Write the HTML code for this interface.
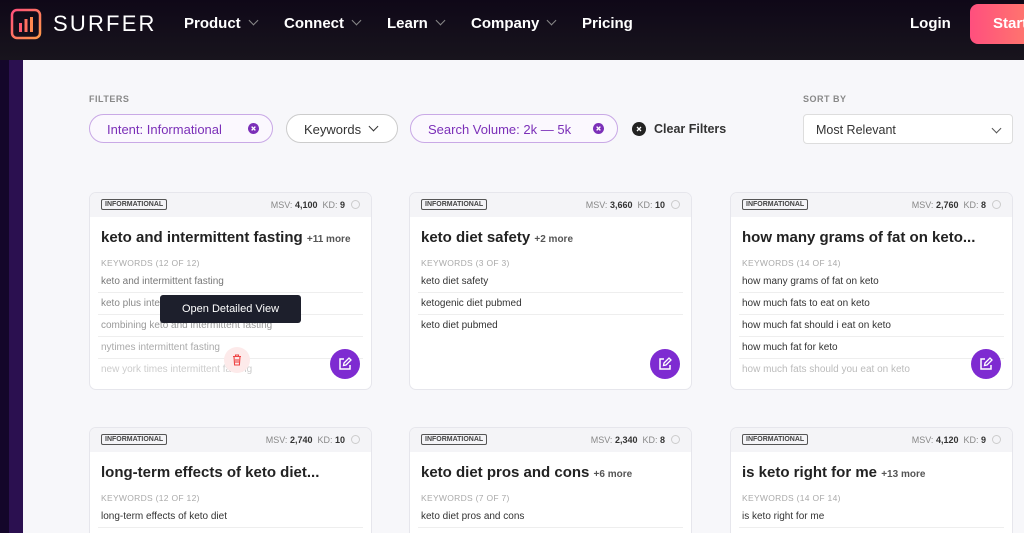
<!DOCTYPE html>
<html style="height:533px;overflow:hidden"><head><meta charset="utf-8"><style>
*{box-sizing:border-box;margin:0;padding:0}
body{width:1024px;height:533px;overflow:hidden;font-family:"Liberation Sans",sans-serif;background:#f7f7fa;position:relative}
.nav{position:absolute;left:0;top:0;width:1024px;height:60px;background:linear-gradient(#0f0818,#18141d);color:#fff}
.nav .it{position:absolute;top:15px;font-weight:bold;font-size:15px}
.chev{display:inline-block;width:7px;height:7px;border-right:1.5px solid #888;border-bottom:1.5px solid #888;transform:rotate(45deg);margin-left:9px;position:relative;top:-4px}
.strip1{position:absolute;left:0;top:60px;width:9px;height:473px;background:#14062a}
.strip2{position:absolute;left:9px;top:60px;width:14px;height:473px;background:#2b1050}
.lbl{position:absolute;font-size:9px;color:#888;letter-spacing:.5px;font-weight:bold}
.pill{position:absolute;top:114px;height:29px;border-radius:15px;font-size:13px;padding:7px 0 0 17px}
.pp{border:1.5px solid #c9a9e6;color:#7b2fb8;background:#fbf8fe}
.x{position:absolute;right:13px;top:8px;width:11px;height:11px}
.card{position:absolute;width:283px;height:198px;background:#fff;border:1px solid #e6e6ec;border-radius:7px;overflow:hidden}
.card.b{height:106px;border-bottom:0;border-radius:7px 7px 0 0}
.hd{height:24px;background:#f4f4f7;position:relative}
.tag{position:absolute;left:11px;top:6px;border:1px solid #555;border-radius:2px;font-size:7px;font-weight:bold;padding:1px 3px;color:#444}
.ms{position:absolute;right:26px;top:7px;font-size:9px;color:#888}
.ms b{color:#333}
.dot{position:absolute;right:11px;top:7px;width:9px;height:9px;border-radius:50%;border:1px solid #ccc}
.ttl{position:absolute;left:11px;top:36px;font-size:15px;font-weight:bold;color:#222}
.ttl small{font-size:10px;color:#555}
.kw{position:absolute;left:11px;top:65px;font-size:8.5px;color:#aaa;letter-spacing:.3px}
.rows{position:absolute;left:0;top:78px;width:100%}
.rows div{height:22px;border-bottom:1px solid #eee;margin:0 8px;padding:5px 3px;font-size:10px;color:#333}
.ed{position:absolute;right:11px;top:156px;width:30px;height:30px;border-radius:50%;background:#7e2bd1}
.ed svg{position:absolute;left:8px;top:8px}
</style></head><body>
<div class="nav">
<svg style="position:absolute;left:10px;top:8px" width="32" height="32" viewBox="0 0 32 32"><defs><linearGradient id="g" x1="0" y1="0" x2="1" y2="1"><stop offset="0" stop-color="#ff4f7a"/><stop offset="1" stop-color="#ff9a4a"/></linearGradient></defs><rect x="2" y="2" width="28" height="28" rx="5" fill="none" stroke="url(#g)" stroke-width="2.5"/><rect x="9" y="15" width="3" height="9" fill="#ff5a6e"/><rect x="14.5" y="11" width="3" height="13" fill="#ff7060"/><rect x="20" y="9" width="3" height="15" fill="#ff8850"/></svg>
<div class="it" style="left:53px;top:11px;font-weight:normal;font-size:22px;letter-spacing:2.2px">SURFER</div>
<div class="it" style="left:184px">Product<span class="chev"></span></div>
<div class="it" style="left:284px">Connect<span class="chev"></span></div>
<div class="it" style="left:387px">Learn<span class="chev"></span></div>
<div class="it" style="left:471px">Company<span class="chev"></span></div>
<div class="it" style="left:582px">Pricing</div>
<div class="it" style="left:910px">Login</div>
<div style="position:absolute;left:970px;top:4px;width:70px;height:40px;border-radius:8px;background:linear-gradient(90deg,#ff4f7e,#ff7e6a);color:#fff;font-weight:bold;font-size:15px;padding:11px 0 0 23px">Start</div>
</div>
<div class="strip1"></div><div class="strip2"></div>
<div class="lbl" style="left:89px;top:94px">FILTERS</div>
<div class="lbl" style="left:803px;top:94px">SORT BY</div>
<div class="pill pp" style="left:89px;width:184px">Intent: Informational<svg class="x" viewBox="0 0 10 10"><circle cx="5" cy="5" r="5" fill="#7b2fb8"/><path d="M3.3 3.3l3.4 3.4M6.7 3.3l-3.4 3.4" stroke="#fff" stroke-width="1.2"/></svg></div>
<div class="pill" style="left:286px;width:112px;border:1.5px solid #ccc;background:#fff;color:#333">Keywords<span class="chev" style="border-color:#333"></span></div>
<div class="pill pp" style="left:410px;width:208px">Search Volume: 2k — 5k<svg class="x" viewBox="0 0 10 10"><circle cx="5" cy="5" r="5" fill="#7b2fb8"/><path d="M3.3 3.3l3.4 3.4M6.7 3.3l-3.4 3.4" stroke="#fff" stroke-width="1.2"/></svg></div>
<svg style="position:absolute;left:632px;top:122px" width="14" height="14" viewBox="0 0 14 14"><circle cx="7" cy="7" r="7" fill="#222"/><path d="M5 5l4 4M9 5l-4 4" stroke="#fff" stroke-width="1.3"/></svg>
<div style="position:absolute;left:654px;top:122px;font-size:12.5px;font-weight:bold;color:#333">Clear Filters</div>
<div style="position:absolute;left:803px;top:114px;width:210px;height:30px;background:#fff;border:1px solid #ddd;border-radius:4px;font-size:12.5px;color:#333;padding:8px 12px">Most Relevant<span class="chev" style="position:absolute;right:12px;top:10px;border-color:#555"></span></div>

<div class="card" style="left:89px;top:192px"><div class="hd"><span class="tag">INFORMATIONAL</span><span class="ms">MSV: <b>4,100</b> &nbsp;KD: <b>9</b></span><span class="dot"></span></div>
<div class="ttl">keto and intermittent fasting <small>+11 more</small></div><div class="kw">KEYWORDS (12 OF 12)</div>
<div class="rows"><div style="color:#777">keto and intermittent fasting</div><div style="color:#888">keto plus intermittent fasting</div><div style="color:#999">combining keto and intermittent fasting</div><div style="color:#aaa">nytimes intermittent fasting</div><div style="color:#ccc;border:0">new york times intermittent fasting</div></div>
<div style="position:absolute;left:70px;top:102px;width:141px;height:28px;background:#1d1f2c;border-radius:3px;color:#fff;font-size:11px;text-align:center;line-height:28px">Open Detailed View</div>
<div style="position:absolute;left:134px;top:154px;width:26px;height:26px;border-radius:50%;background:#fdeaea"><svg style="position:absolute;left:8px;top:7px" width="10" height="12" viewBox="0 0 10 12"><path d="M1 2.5h8M3.5 2.5V1h3v1.5M2 2.5l.6 8.5h4.8L8 2.5M4 5v4M6 5v4" fill="none" stroke="#e44" stroke-width="1.1"/></svg></div>
<div class="ed"><svg width="14" height="14" viewBox="0 0 14 14"><path d="M6 2H2v10h10V8" fill="none" stroke="#fff" stroke-width="1.5"/><path d="M5.5 8.5l.5-2.5 5-5 2 2-5 5z" fill="none" stroke="#fff" stroke-width="1.3"/></svg></div></div>

<div class="card" style="left:409px;top:192px"><div class="hd"><span class="tag">INFORMATIONAL</span><span class="ms">MSV: <b>3,660</b> &nbsp;KD: <b>10</b></span><span class="dot"></span></div>
<div class="ttl">keto diet safety <small>+2 more</small></div><div class="kw">KEYWORDS (3 OF 3)</div>
<div class="rows"><div>keto diet safety</div><div>ketogenic diet pubmed</div><div style="border:0">keto diet pubmed</div></div><div class="ed"><svg width="14" height="14" viewBox="0 0 14 14"><path d="M6 2H2v10h10V8" fill="none" stroke="#fff" stroke-width="1.5"/><path d="M5.5 8.5l.5-2.5 5-5 2 2-5 5z" fill="none" stroke="#fff" stroke-width="1.3"/></svg></div></div>

<div class="card" style="left:730px;top:192px"><div class="hd"><span class="tag">INFORMATIONAL</span><span class="ms">MSV: <b>2,760</b> &nbsp;KD: <b>8</b></span><span class="dot"></span></div>
<div class="ttl">how many grams of fat on keto...</div><div class="kw">KEYWORDS (14 OF 14)</div>
<div class="rows"><div>how many grams of fat on keto</div><div>how much fats to eat on keto</div><div>how much fat should i eat on keto</div><div>how much fat for keto</div><div style="color:#bbb;border:0">how much fats should you eat on keto</div></div><div class="ed"><svg width="14" height="14" viewBox="0 0 14 14"><path d="M6 2H2v10h10V8" fill="none" stroke="#fff" stroke-width="1.5"/><path d="M5.5 8.5l.5-2.5 5-5 2 2-5 5z" fill="none" stroke="#fff" stroke-width="1.3"/></svg></div></div>

<div class="card b" style="left:89px;top:427px"><div class="hd"><span class="tag">INFORMATIONAL</span><span class="ms">MSV: <b>2,740</b> &nbsp;KD: <b>10</b></span><span class="dot"></span></div>
<div class="ttl">long-term effects of keto diet...</div><div class="kw">KEYWORDS (12 OF 12)</div>
<div class="rows"><div>long-term effects of keto diet</div></div></div>

<div class="card b" style="left:409px;top:427px"><div class="hd"><span class="tag">INFORMATIONAL</span><span class="ms">MSV: <b>2,340</b> &nbsp;KD: <b>8</b></span><span class="dot"></span></div>
<div class="ttl">keto diet pros and cons <small>+6 more</small></div><div class="kw">KEYWORDS (7 OF 7)</div>
<div class="rows"><div>keto diet pros and cons</div></div></div>

<div class="card b" style="left:730px;top:427px"><div class="hd"><span class="tag">INFORMATIONAL</span><span class="ms">MSV: <b>4,120</b> &nbsp;KD: <b>9</b></span><span class="dot"></span></div>
<div class="ttl">is keto right for me <small>+13 more</small></div><div class="kw">KEYWORDS (14 OF 14)</div>
<div class="rows"><div>is keto right for me</div></div></div>
</body></html>
